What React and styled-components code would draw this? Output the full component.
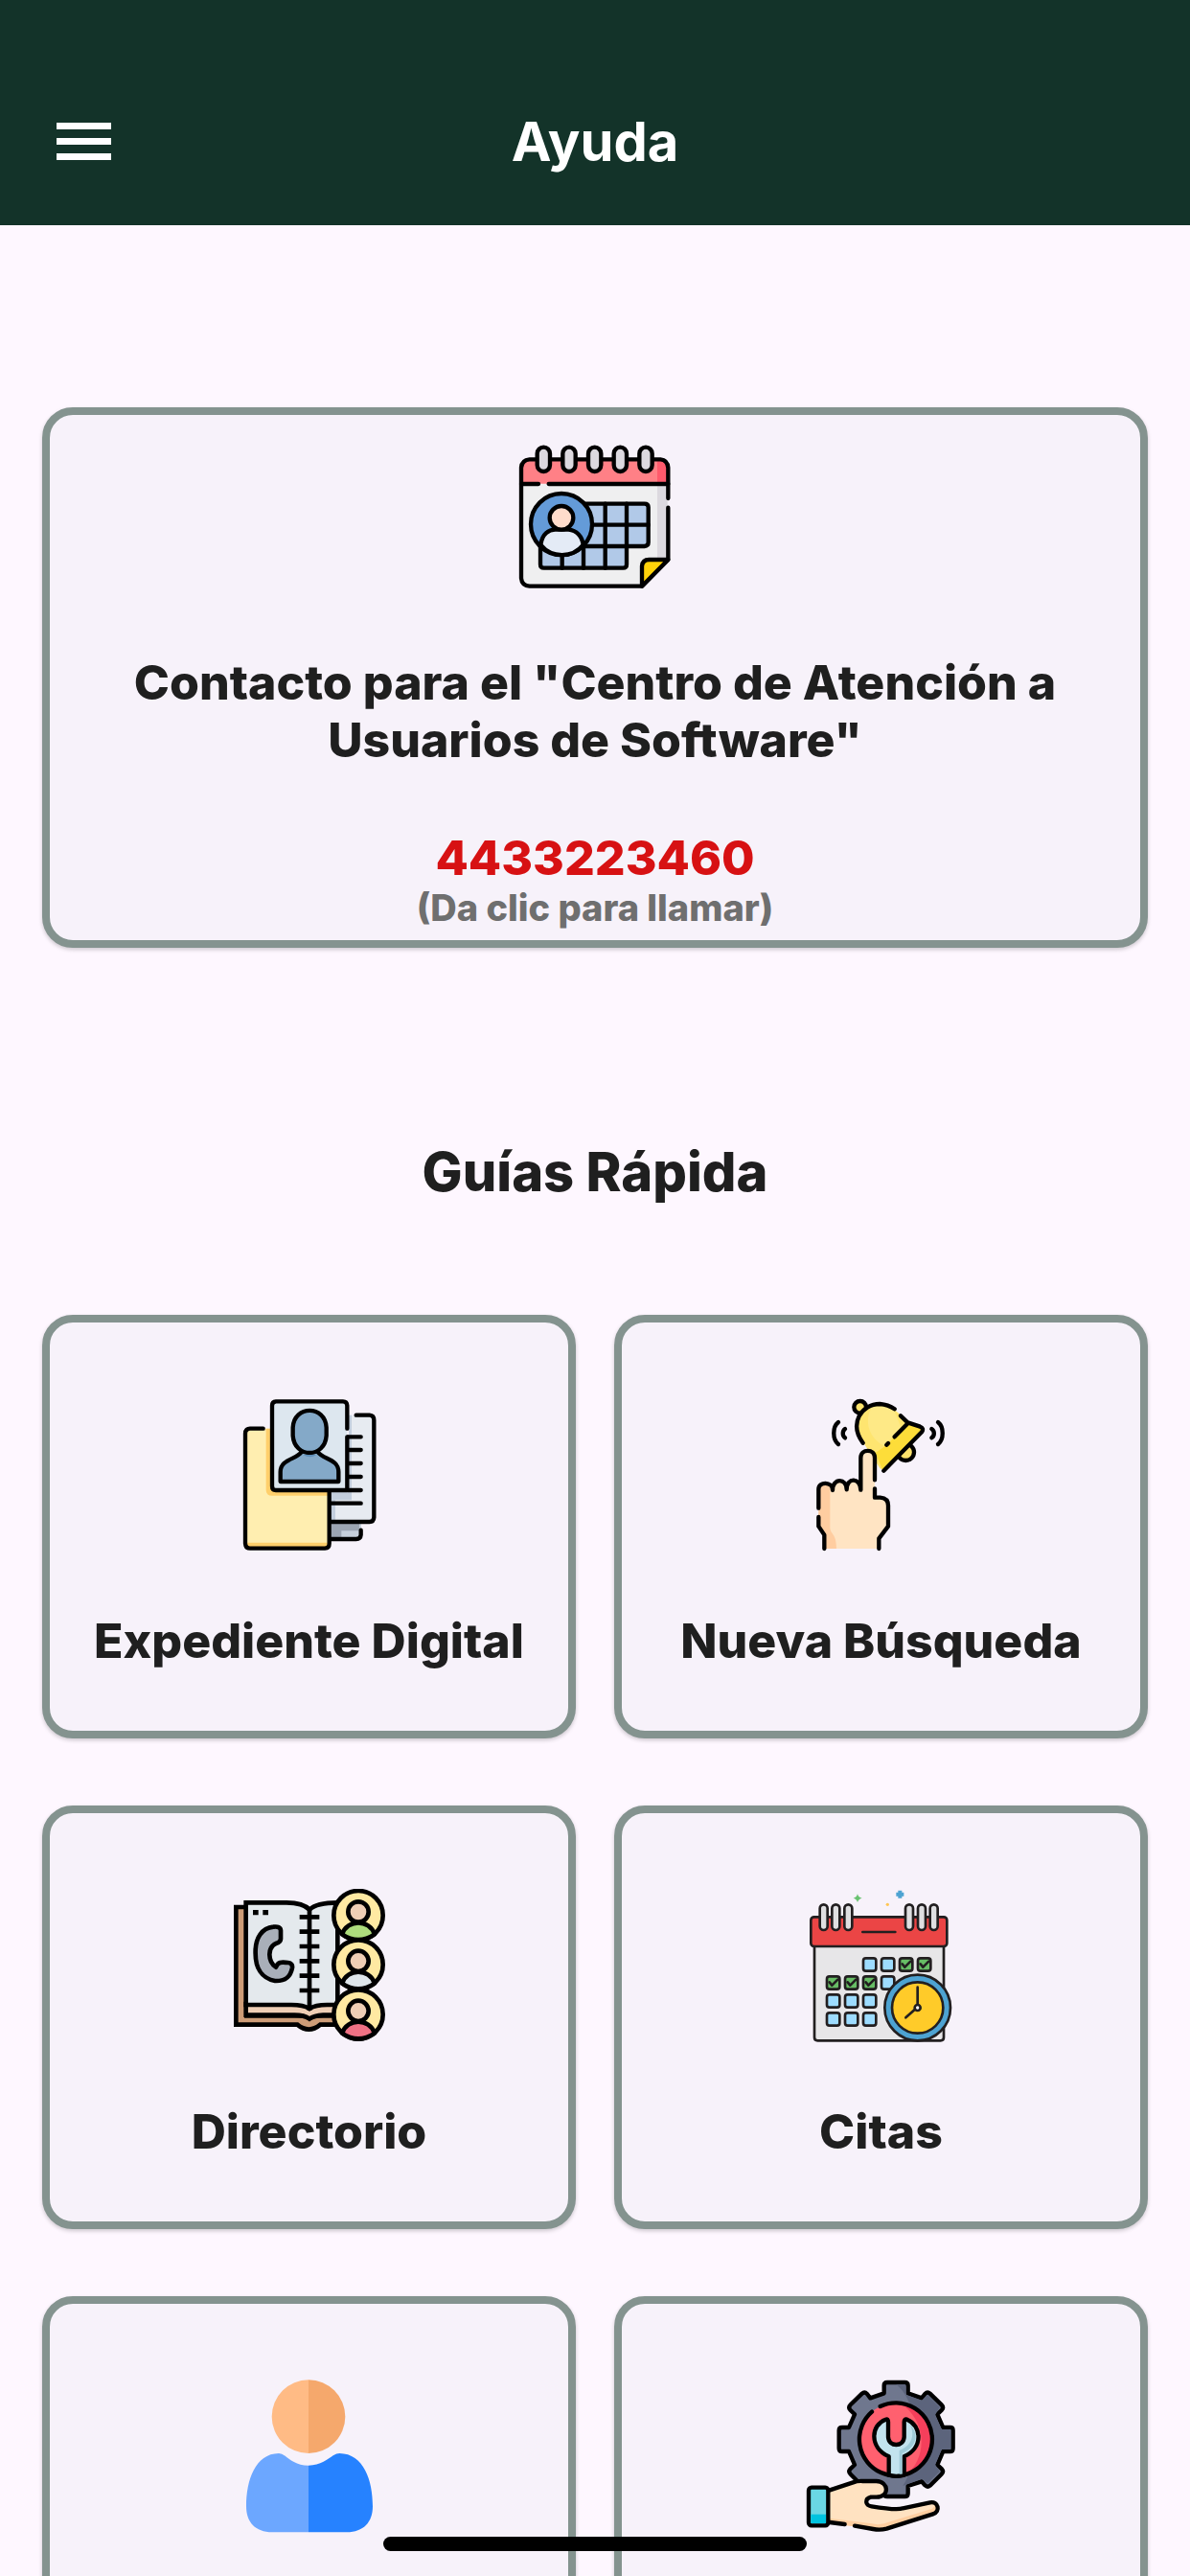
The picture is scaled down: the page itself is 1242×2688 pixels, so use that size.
import styled, { createGlobalStyle } from "styled-components";

const App = () => {
  return (
    <Screen>
      <GlobalStyle />
      <Header>
        <MenuButton type="button" aria-label="Abrir menú">
          <svg width="57" height="39" viewBox="0 0 57 39" aria-hidden="true">
            <path d="M0 0h57v7H0zM0 16h57v7H0zM0 32h57v7H0z" fill="#fff" />
          </svg>
        </MenuButton>
        <HeaderTitle>Ayuda</HeaderTitle>
      </Header>
      <Content>
        <ContactCard>
          <ContactIcon />
          <CardTitle as="h2">
            Contacto para el "Centro de Atención a Usuarios de Software"
          </CardTitle>
          <PhoneLink href="tel:4433223460">
            4433223460
            <small>(Da clic para llamar)</small>
          </PhoneLink>
        </ContactCard>
        <SectionTitle>Guías Rápida</SectionTitle>
        <GuideGrid>
          {guides.map(({ label, title, Icon }) => (
            <GuideCard key={label} type="button" aria-label={label}>
              <Icon />
              {title && <CardTitle>{title}</CardTitle>}
            </GuideCard>
          ))}
        </GuideGrid>
      </Content>
      <HomeIndicator />
    </Screen>
  );
};

const Icon = ({ viewBox, children, width = 13 }) => (
  <IconSvg
    viewBox={viewBox}
    fill="none"
    stroke="#000"
    strokeWidth={width}
    strokeLinecap="round"
    strokeLinejoin="round"
    aria-hidden="true"
  >
    {children}
  </IconSvg>
);

const ContactIcon = () => (
  <Icon viewBox="63 57 480 480">
    <path d="M72 190H532V432L450 515H96Q72 513 72 490Z" fill="#efeff0" stroke="none" />
    <path d="M498 190H530V430H498Z" fill="#dcd9df" stroke="none" />
    <path d="M72 194V144Q74 118 98 118H508Q532 120 532 144V194Z" fill="#ff8086" stroke="none" />
    <path d="M498 118H508Q532 120 532 144V194H498Z" fill="#ff5a6c" stroke="none" />
    <path d="M532 240V144Q530 120 508 118H98Q74 120 72 144V490Q74 513 98 515H450L532 432V269" />
    <path d="M72 195H126M158 195H532" />
    <path d="M450 515V452Q452 432 472 432H532Z" fill="#ffd20a" />
    <path d="M132 360V447Q132 458 143 458H391Q402 458 402 447V390H458Q470 389 470 378V268Q470 257 458 257H270Z" fill="#b1c9e8" />
    <path d="M335 257V458M402 257V390M280 323H470M260 390H402M200 410V458M267 390V458" />
    <circle cx="198" cy="321" r="96" fill="#649bd8" />
    <path d="M133 386C137 350 160 338 178 338H220C245 340 263 358 266 386C232 428 168 428 133 386Z" fill="#e4ebf6" />
    <circle cx="198" cy="301" r="37" fill="#ffdccb" />
    {[142, 222, 302, 382, 462].map((x) => (
      <rect key={x} x={x - 20} y="80" width="40" height="76" rx="20" fill="#dcd9df" />
    ))}
  </Icon>
);

const RecordIcon = () => (
  <Icon viewBox="22 57 480 480">
    <path d="M330 450H424V498H330Z" fill="#c6cfdb" stroke="none" />
    <path d="M330 450H418V472H362V498H330Z" fill="#9ca5b3" stroke="none" />
    <path d="M385 110H464V444H325V340H385Z" fill="#e7ebf1" stroke="none" />
    <path d="M385 110H394V376H343V444H328V345H385Z" fill="#c3cedd" stroke="none" />
    <path d="M61 168Q62 152 78 152H145V345H324V526H61Z" fill="#ffeeb0" stroke="none" />
    <path d="M126 152H145V345H324V362H145Q126 362 126 344ZM66 509H320V522H66Z" fill="#ffcf6b" stroke="none" />
    <path d="M117 152H76Q61 153 61 168V512Q62 527 76 527H310Q324 526 324 512V350" />
    <path d="M408 110H450Q464 111 464 126V430Q463 444 450 444H326M423 470V485Q422 498 408 498H327" />
    <path d="M379 178H423M382 219H423M382 261H423M382 303H423M382 345H423M326 386H423" />
    <path d="M145 67H380V345H145Z" fill="#dde7ef" stroke="none" />
    <path d="M380 152V80Q379 67 367 67H157Q145 68 145 80V332Q145 345 157 345H380V178" />
    <path d="M171 318V288C171 246 222 250 238 224H287C304 250 353 246 353 288V318Z" fill="#84a9c8" />
    <path d="M210 149C213 78 312 78 315 149V174C310 246 215 246 210 174Z" fill="#84a9c8" />
    <path d="M242 234H284Q264 248 242 234Z" fill="#5f8fb9" stroke="none" />
  </Icon>
);

const SearchIcon = () => (
  <Icon viewBox="28 57 480 480">
    <circle cx="201" cy="85" r="19" fill="#fde36c" />
    <circle cx="344" cy="226" r="26" fill="#fde36c" />
    <path d="M213 199C166 141 204 75 263 75C290 75 307 86 350 134L390 145Q402 151 394 163L276 284L263 276Z" fill="#fee570" stroke="none" />
    <path d="M349 137L388 148Q400 153 391 165L272 283L249 228L285 203Z" fill="#fddd39" stroke="none" />
    <path d="M240 82C208 130 233 187 277 206L329 148L305 90Q270 70 240 82Z" fill="#fee986" stroke="none" />
    <path d="M210 197C166 137 204 75 263 75Q289 77 309 91M328 112L350 133L389 146Q402 151 394 163L275 284M349 137L309 178M284 203L289 198" />
    <path d="M133 132C114 147 114 185 133 201M154 153C145 160 145 174 154 181M445 132C464 147 464 185 445 201M425 153C435 160 435 174 425 181" />
    <path d="M71 335Q72 322 92 322Q112 321 116 329Q138 306 159 326Q180 303 203 320V244C203 212 247 212 247 244V368H265Q288 370 289 390V458L261 497V528H88V485L71 460Z" fill="#ffe4c3" stroke="none" />
    <path d="M71 335Q73 323 107 324V464C110 485 127 480 127 528H88V485L71 460Z" fill="#ffcda0" stroke="none" />
    <path d="M71 401V342C71 317 115 317 115 345C115 306 159 306 159 343C159 302 203 306 203 344V244C203 214 247 214 247 244V313M247 340V368H264Q289 370 289 393V458L260 496V528M71 429V458L89 485V528" />
  </Icon>
);

const contacts = [
  [116, "#aedd7d"],
  [270, "#dfe6eb"],
  [426, "#ef7184"],
];

const DirectoryIcon = () => (
  <Icon viewBox="22 33 480 480" width={14}>
    <path d="M32 90H65V430H356V458H296Q260 488 224 458H32Z" fill="#cd9c77" strokeLinejoin="miter" />
    <path d="M63 393H210Q248 393 262 406Q278 393 345 393V428H305Q276 430 262 440Q246 428 215 428H63Z" fill="#efceb5" strokeLinejoin="miter" />
    <path d="M63 76H190Q242 76 262 98Q284 76 350 76V396H317Q280 396 262 408Q244 396 205 396H63Z" fill="#e4e9ed" strokeLinejoin="miter" />
    <path d="M262 96V414M231 121H293M231 167H293M231 213H293M231 259H293M231 305H293M231 351H293" strokeLinecap="butt" />
    <path d="M85 99H102V115H85ZM116 99H133V115H116Z" fill="#000" stroke="none" />
    <path d="M149 152Q171 149 172 163V190Q171 200 159 203C128 216 132 261 157 278C165 259 177 263 195 264Q210 266 208 280C202 312 183 322 154 321C111 313 93 278 93 236C91 186 114 155 149 152Z" fill="#a9afb9" />
    {contacts.map(([y, color]) => (
      <g key={y}>
        <circle cx="415" cy={y} r="77" fill="#ffe9a2" />
        <path d={`M364 ${y + 59}C380 ${y + 11} 450 ${y + 11} 466 ${y + 59}Q415 ${y + 94} 364 ${y + 59}Z`} fill={color} />
        <circle cx="415" cy={y - 11} r="32" fill="#efceb5" />
      </g>
    ))}
  </Icon>
);

const dayBoxes = [
  [231, 270], [288, 270], [345, 270, true], [402, 270, true],
  [117, 327, true], [174, 327, true], [231, 327, true], [288, 327],
  [117, 384], [174, 384], [231, 384],
  [117, 441], [174, 441], [231, 441],
];

const AppointmentIcon = () => (
  <Icon viewBox="28 33 480 480" width={8}>
    <g stroke="#221f20">
      <path d="M58 212H463V498Q463 508 453 508H68Q58 508 58 498Z" fill="#e7e6e8" />
      <rect x="47" y="121" width="426" height="92" rx="10" fill="#eb4545" />
      <path d="M209 168H311" />
      {[87, 125, 164, 355, 394, 432].map((x) => (
        <rect key={x} x={x - 12} y="82" width="24" height="80" rx="12" fill="#dfdfe1" />
      ))}
      {dayBoxes.map(([x, y, done]) => (
        <g key={`${x}-${y}`}>
          <rect x={x - 20} y={y - 20} width="40" height="40" rx="8" fill={done ? "#67bd65" : "#9ddcff"} />
          {done && <path d={`M${x - 12} ${y - 2}L${x - 4} ${y + 8}L${x + 14} ${y - 10}`} />}
        </g>
      ))}
      <circle cx="381" cy="405" r="103" fill="#4da3d2" />
      <circle cx="381" cy="405" r="80" fill="#ffcb29" />
      <path d="M381 341V396M372 411L344 436" />
      <circle cx="381" cy="405" r="9" fill="#fff" />
    </g>
    <g stroke="none">
      <path d="M193 49Q196 60 207 62Q196 64 193 75Q190 64 180 62Q190 60 193 49Z" fill="#68c270" />
      <path d="M320 38H332V44H338V56H332V62H320V56H314V44H320Z" fill="#4da3d2" />
      <circle cx="287" cy="82" r="5" fill="#ffc654" />
    </g>
  </Icon>
);

const UserIcon = () => (
  <Icon viewBox="7 69 480 480">
    <g stroke="none">
      <path d="M244 70A115 115 0 0 0 244 300Z" fill="#ffbb85" />
      <path d="M244 70A115 115 0 0 1 244 300Z" fill="#f5a86c" />
      <path d="M244 338C207 338 184 318 171 308Q160 300 151 300C77 301 49 385 49 466C49 516 78 547 130 547H244Z" fill="#6ca7ff" />
      <path d="M244 338C281 338 306 317 321 307Q332 300 341 300C417 301 445 385 445 466C445 516 416 547 364 547H244Z" fill="#2682ff" />
    </g>
  </Icon>
);

const ServiceIcon = () => (
  <Icon viewBox="58 69 480 480">
    <path
      d="M306 112V88Q306 78 316 78H371Q381 78 381 88V112L424 127L434 114Q442 106 450 113L486 148Q494 156 487 164L473 178L491 219H513Q522 219 522 228V284Q522 294 513 294H491L473 336L487 349Q494 357 486 365L450 401Q442 408 434 400L424 388L381 402V425Q381 435 371 435H316Q306 435 306 425V402L263 388L253 400Q245 408 237 401L201 365Q193 357 200 349L214 336L196 294H175Q165 294 165 284V228Q165 219 175 219H196L214 178L200 164Q193 156 201 148L237 113Q245 106 253 114L263 127Z"
      fill="#6f778e"
    />
    <path d="M343 84H370Q375 85 375 92V116L424 134L442 116L480 155L466 180L486 225H515V288H486L466 335L480 357L442 394L424 380L365 402C410 340 427 145 343 84Z" fill="#5c647c" stroke="none" />
    <circle cx="343" cy="256" r="114" fill="#ff606f" stroke="none" />
    <path d="M359 145A114 114 0 0 1 375 367C440 319 443 200 359 145Z" fill="#f53f5b" stroke="none" />
    <path d="M294 153A114 114 0 1 1 268 170" />
    <path d="M321 368V310C259 282 264 211 311 194Q319 191 319 202V249C321 281 367 281 369 249V202Q369 191 378 194C424 213 430 283 369 310V368Q344 375 321 368Z" fill="#c2e3ee" />
    <path d="M385 207C421 244 403 282 363 300V365H354V291C396 275 404 238 385 207Z" fill="#9fcbd8" stroke="none" />
    <path d="M134 418L221 388H282C320 388 325 437 282 437H262C240 444 247 463 267 466L342 474L450 453C475 450 484 482 458 490L314 536Q291 541 272 537L134 518Z" fill="#ffe2c1" stroke="none" />
    <path d="M134 482L284 508L467 463Q474 481 458 489L314 536Q291 541 272 537L134 518Z" fill="#ffcea0" stroke="none" />
    <path d="M134 479L279 503L454 460Q470 462 457 473L306 520Q286 525 268 520L134 503Z" fill="#ffe2c1" stroke="none" />
    <path d="M134 416L209 391Q223 386 239 387H282C321 388 325 437 282 437H265C244 443 247 463 267 466Q346 479 365 472L450 454C476 449 484 482 459 490L314 536Q293 541 272 537L214 527M183 522L136 516" />
    <rect x="70" y="407" width="61" height="119" rx="9" fill="#6ad7e4" />
    <path d="M77 491H124V519H77Z" fill="#00c3df" stroke="none" />
  </Icon>
);

const guides = [
  { label: "Expediente Digital", title: "Expediente Digital", Icon: RecordIcon },
  { label: "Nueva Búsqueda", title: "Nueva Búsqueda", Icon: SearchIcon },
  { label: "Directorio", title: "Directorio", Icon: DirectoryIcon },
  { label: "Citas", title: "Citas", Icon: AppointmentIcon },
  { label: "Usuario", Icon: UserIcon },
  { label: "Servicios", Icon: ServiceIcon },
];

const GlobalStyle = createGlobalStyle`
  * {
    box-sizing: border-box;
  }

  body {
    margin: 0;
    background: #fef7ff;
    color: #1f1f1f;
    font-family: Inter, "Liberation Sans", sans-serif;
  }

  h1, h2 {
    margin: 0;
  }
`;

const Screen = styled.div`
  display: flex;
  flex-direction: column;
  height: 100vh;
`;

const Header = styled.header`
  display: grid;
  grid-template-columns: 1fr auto 1fr;
  align-items: center;
  flex-shrink: 0;
  height: 235px;
  padding: 60px 59px 0;
  background: #133329;
  color: #fff;
`;

const MenuButton = styled.button`
  display: flex;
  justify-self: start;
  padding: 0;
  border: 0;
  background: none;
  cursor: pointer;
`;

const HeaderTitle = styled.h1`
  font-size: 56px;
  font-weight: 700;
  line-height: 68px;
`;

const Content = styled.main`
  flex: 1;
  min-height: 0;
  padding: 190px 44px 72px;
  overflow-y: auto;
  scrollbar-width: none;
`;

const ContactCard = styled.section`
  display: flex;
  flex-direction: column;
  align-items: center;
  gap: 63px;
  padding: 26px 24px 12px;
  border: 8px solid #84938f;
  border-radius: 32px;
  background: #f7f2fa;
  box-shadow: 0 2px 4px rgba(0, 0, 0, 0.2);
  text-align: center;
`;

const GuideCard = styled.button`
  display: flex;
  flex-direction: column;
  align-items: center;
  gap: 63px;
  min-height: 442px;
  padding: 79px 8px 64px;
  border: 8px solid #84938f;
  border-radius: 32px;
  background: #f7f2fa;
  box-shadow: 0 2px 4px rgba(0, 0, 0, 0.2);
  color: inherit;
  font-family: inherit;
  cursor: pointer;
`;

const IconSvg = styled.svg`
  flex-shrink: 0;
  width: 160px;
  height: 160px;
`;

const CardTitle = styled.span`
  font-size: 50px;
  font-weight: 800;
  line-height: 60px;
`;

const PhoneLink = styled.a`
  color: #d71113;
  font-size: 50px;
  font-weight: 800;
  line-height: 60px;
  text-decoration: none;

  small {
    display: block;
    color: #6f6f6f;
    font-size: 38px;
    line-height: 44px;
  }
`;

const SectionTitle = styled.h2`
  margin: 200px 0 115px;
  font-size: 56px;
  font-weight: 800;
  line-height: 68px;
  text-align: center;
`;

const GuideGrid = styled.div`
  display: grid;
  grid-template-columns: 1fr 1fr;
  gap: 70px 40px;
`;

const HomeIndicator = styled.div`
  position: fixed;
  bottom: 26px;
  left: 50%;
  width: 442px;
  height: 15px;
  margin-left: -221px;
  border-radius: 8px;
  background: #000;
`;

export default App;
